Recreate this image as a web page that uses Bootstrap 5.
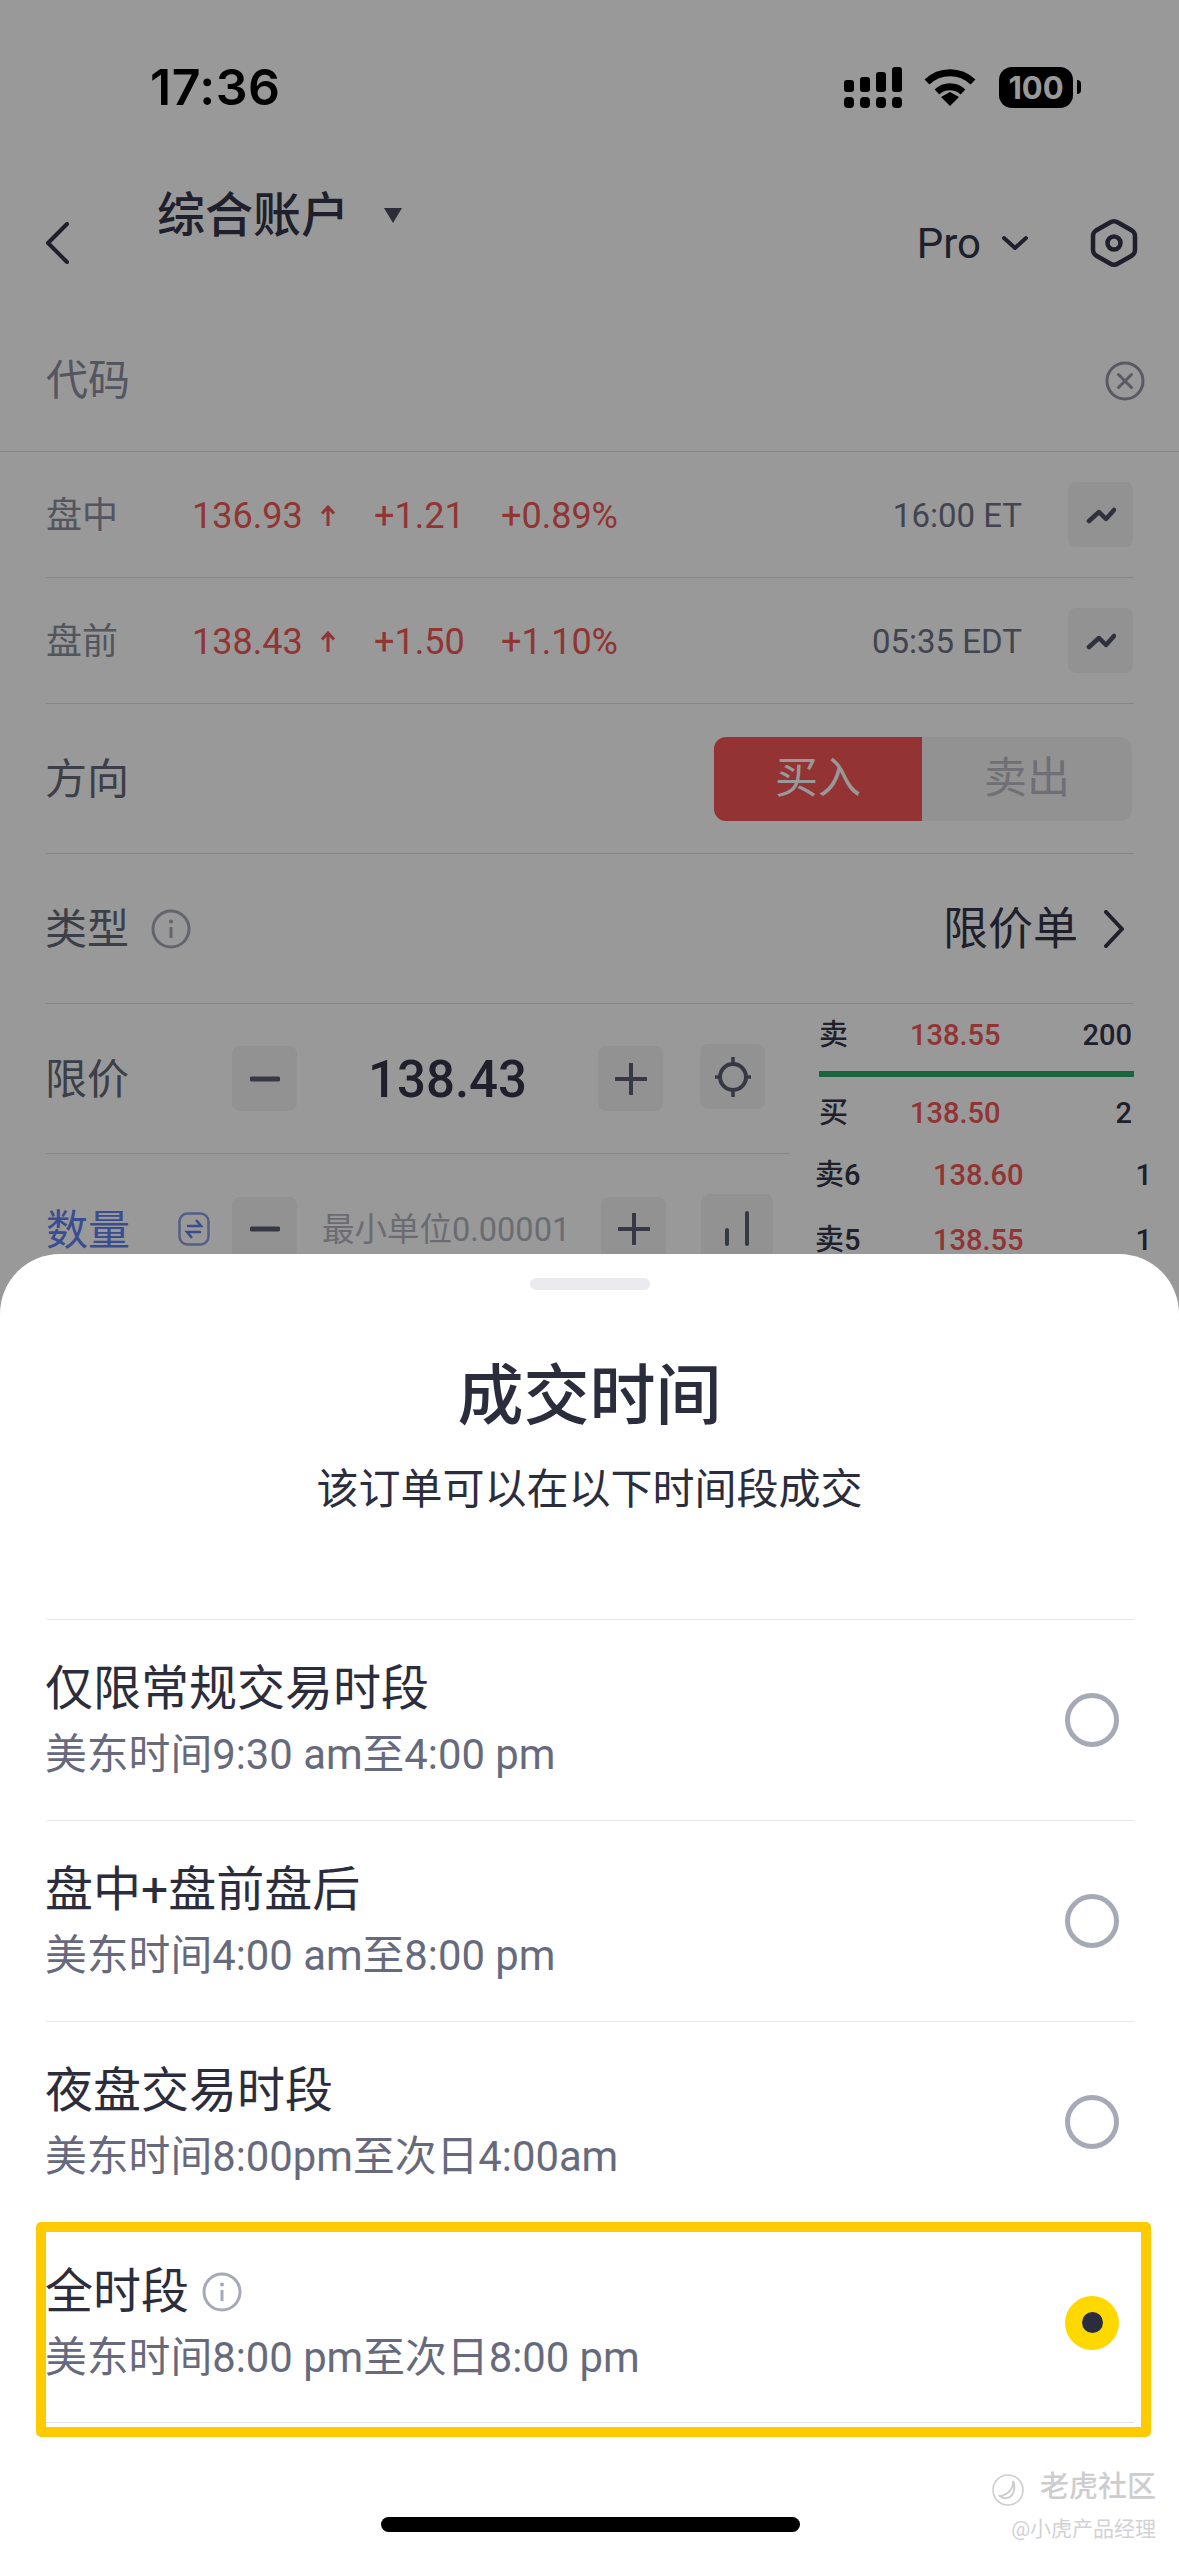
<!DOCTYPE html>
<html lang="zh-CN">
<head>
    <meta charset="UTF-8">
    <meta name="viewport" content="width=device-width, initial-scale=1.0">
    <title>成交时间</title>
    <link href="https://cdn.jsdelivr.net/npm/bootstrap@5.3.0/dist/css/bootstrap.min.css" rel="stylesheet">
    <style>
body { margin: 0; background: #fff; }
.screen { width: 1179px; height: 2556px; position: relative; overflow: hidden; background: #fff; color: #34364a;
    font-family: Roboto, "Noto Sans CJK SC", sans-serif; }
.dim-layer { position: absolute; inset: 0; background: rgba(0,0,0,.4); }

/* status bar */
.status-bar { height: 174px; padding: 0 98px 0 150px; }
.clock { font-family: Inter, sans-serif; font-weight: 600; font-size: 50px; letter-spacing: .5px; color: #000; line-height: 1; }
.status-wifi { margin: 0 23px 0 22px; }
.batt { width: 74px; height: 41px; background: #000; border-radius: 13px; color: #fff; font-family: Inter, sans-serif; font-weight: 700; font-size: 31px; line-height: 1; }
.batt-nub { width: 4px; height: 14px; background: #000; border-radius: 0 5px 5px 0; margin-left: 4px; }

/* header */
.top-head { height: 138px; padding: 0 41px 0 45px; }
.acct { font-size: 48px; font-weight: 500; line-height: 60px; margin: 6px 0 60px 88px; }
.acct-caret { margin: 0 0 56px 35px; }
.pro-txt { font-size: 42px; line-height: 1; padding-top: 2px; }
.pro-chev { margin: 0 62px 0 21px; }
.code-row { height: 140px; padding: 0 34px 2px 46px; border-bottom: 1px solid #e2e2e6; }
.code-txt { font-size: 42px; color: #8b8e9e; padding-top: 2px; line-height: 1.2; }

/* form rows */
.line-row { margin: 0 45px 0 46px; border-bottom: 1px solid #e2e2e6; }
.quote-row { height: 126px; font-size: 36px; line-height: 1; padding-right: 1px; }
.q-label { width: 147px; color: #8b8e9e; padding-top: 2px; }
.q-price { width: 182px; color: #f25757; margin-left: -1px; padding-top: 2px; }
.q-chg { width: 127px; color: #f25757; padding-top: 2px; }
.q-pct { color: #f25757; padding-top: 2px; }
.q-time { color: #6f7284; font-size: 33px; padding-top: 2px; }
.tool-btn { width: 65px; height: 65px; background: #f3f3f6; border-radius: 8px; flex: none; }
.q-btn { margin-left: 46px; }
.form-row { height: 150px; }
.f-label { font-size: 42px; color: #666979; line-height: 1; padding-top: 3px; margin-left: -1px; }
.side-btn { height: 84px; width: 208px; font-size: 43px; line-height: 1; }
.side-buy { background: #f65656; color: #fff; border-radius: 12px 0 0 12px; }
.side-sell { background: #f3f3f6; color: #b9bac3; border-radius: 0 12px 12px 0; width: 210px; margin-right: 2px; }
.pick-txt { font-size: 45px; line-height: 1; color: #34364a; padding-top: 2px; }
.pick-chev { margin: 0 9px 0 25px; }
.info-type { margin-left: 22px; }

/* price, quantity and order book */
.trade-left { width: 790px; flex: none; padding-left: 46px; }
.trade-row { height: 150px; }
.trade-row-line { border-bottom: 1px solid #e2e2e6; }
.trade-label { width: 187px; flex: none; }
.qty-label { width: 132px; flex: none; color: #5f80f0; font-weight: 400; font-size: 42px; line-height: 1; padding-top: 3px; }
.swap-box { width: 54px; flex: none; }
.price-val { width: 301px; flex: none; text-align: center; font-size: 51px; font-weight: 500; color: #34364a; line-height: 1; padding-top: 2px; }
.min-unit { width: 304px; flex: none; padding-left: 25px; font-size: 32.500px; color: #b3b5bf; line-height: 1; white-space: nowrap; padding-top: 2px; }
.gap-btn { margin-left: 37px; }
.gap-btn-wide { margin-left: 35px; width: 72px; height: 68px; align-self: flex-start; margin-top: 40px; }
.gap-btn-cross { margin-top: -4px; }
.book-col { width: 389px; flex: none; padding-left: 29px; font-size: 29px; line-height: 1; font-weight: 500; color: #34364a; }
.book-row { display: grid; grid-template-columns: 91px 1fr auto; align-items: center; width: 313px; height: 62px; }
.book-bar { width: 315px; height: 6px; background: #2ea868; margin: 5px 0 5px; }
.book-deep { display: grid; grid-template-columns: 118px 1fr auto; align-items: center; width: 337px; height: 65px; margin-left: -4px; }
.book-row + .book-deep { margin-top: -1px; }
.book-px { color: #f25757; }

/* bottom sheet */
.sheet { position: absolute; left: 0; right: 0; bottom: 0; height: 1302px; background: #fff; border-radius: 60px 60px 0 0; color: #2b2d3d; }
.sheet-grip { width: 120px; height: 12px; border-radius: 6px; background: #ebebef; margin: 24px auto 0; }
.sheet-title { font-size: 66px; line-height: 90px; font-weight: 500; margin: 62px 0 0; }
.sheet-sub { font-size: 42px; line-height: 60px; margin: 18px 0 0; color: #2b2d3d; }
.opt-list { margin: 99px 45px 0 46px; }
.opt-row { height: 201px; border-top: 1px solid #e8e8ec; padding-right: 15px; }
.opt-text { padding-top: 37px; align-self: flex-start; margin-left: -1px; }
.opt-name { font-size: 48px; line-height: 64px; }
.opt-time { font-size: 41.800px; line-height: 62px; margin-top: 3px; color: #666a7c; }
.radio-off { width: 54px; height: 54px; border-radius: 50%; border: 5px solid #a6a9b6; }
.radio-on { width: 54px; height: 54px; border-radius: 50%; background: #ffd800; }
.radio-dot { width: 21px; height: 21px; border-radius: 50%; background: #2a2d3e; }
.info-mark { margin-left: 13px; }
.mark-box { position: absolute; left: 36px; top: 968px; width: 1115px; height: 215px; border: 10px solid #fecb00; border-radius: 5px; }
.home-bar { position: absolute; left: 381px; top: 1263px; width: 419px; height: 15px; border-radius: 8px; background: #000; }
.wm { position: absolute; right: 23px; line-height: 1; white-space: nowrap; }
.wm-main { top: 1219px; font-size: 29px; font-weight: 500; color: #cdcdd0; }
.wm-sub { top: 1265px; font-size: 21px; color: #d2d2d5; }
.wm-logo { margin-right: 16px; vertical-align: -9px; }
    </style>
</head>
<body>
<div class="screen">
    <div class="status-bar d-flex align-items-center justify-content-between">
        <div class="clock">17:36</div>
        <div class="d-flex align-items-center">
            <svg width="58" height="41" viewBox="0 0 58 41">
                <rect x="0" y="13" width="10" height="12" rx="3"/>
                <rect x="16" y="10" width="10" height="15" rx="3"/>
                <rect x="32" y="5" width="10" height="20" rx="3"/>
                <rect x="48" y="0" width="10" height="25" rx="3"/>
                <rect x="0" y="30" width="10" height="11" rx="4"/>
                <rect x="16" y="30" width="10" height="11" rx="4"/>
                <rect x="32" y="30" width="10" height="11" rx="4"/>
                <rect x="48" y="30" width="10" height="11" rx="4"/>
            </svg>
            <svg class="status-wifi" width="52" height="38" viewBox="0 0 52 38">
                <path d="M3 14a33 33 0 0 1 46 0M13 24a19 19 0 0 1 26 0" fill="none" stroke="#000" stroke-width="7"/>
                <path d="M17 29l9-5 9 5-9 9z" fill="#000"/>
            </svg>
            <div class="batt d-flex align-items-center justify-content-center">100</div>
            <div class="batt-nub"></div>
        </div>
    </div>

    <div class="top-head d-flex align-items-center">
        <svg width="24" height="42" viewBox="0 0 24 42"><path d="M22 2L3 21l19 19" fill="none" stroke="#34364a" stroke-width="4" stroke-linecap="round" stroke-linejoin="round"/></svg>
        <div class="acct">综合账户</div>
        <svg class="acct-caret" width="18" height="15" viewBox="0 0 18 15"><path d="M0 0h18L9 15z" fill="#4a4c5e"/></svg>
        <div class="pro-txt ms-auto">Pro</div>
        <svg class="pro-chev" width="26" height="16" viewBox="0 0 26 16"><path d="M2 3l11 10L24 3" fill="none" stroke="#34364a" stroke-width="4" stroke-linecap="round" stroke-linejoin="round"/></svg>
        <svg width="48" height="50" viewBox="0 0 48 50">
            <path d="M20 4.500Q24 2 28 4.500L42 12.500Q45 14.500 45 18V32Q45 35.500 42 37.500L28 45.500Q24 48 20 45.500L6 37.500Q3 35.500 3 32V18Q3 14.500 6 12.500Z" fill="none" stroke="#34364a" stroke-width="4.500"/>
            <circle cx="24" cy="25" r="6.500" fill="none" stroke="#34364a" stroke-width="4.500"/>
        </svg>
    </div>

    <div class="code-row d-flex align-items-center justify-content-between">
        <div class="code-txt">代码</div>
        <svg width="40" height="40" viewBox="0 0 40 40">
            <circle cx="20" cy="20" r="18" fill="none" stroke="#9497a5" stroke-width="3"/>
            <path d="M13.500 13.500l13 13M26.500 13.500l-13 13" stroke="#9497a5" stroke-width="3" stroke-linecap="round"/>
        </svg>
    </div>

    <div class="line-row quote-row d-flex align-items-center">
        <div class="q-label">盘中</div>
        <div class="q-price d-flex align-items-center">136.93
            <svg class="ms-3" width="18" height="24" viewBox="0 0 18 24"><path d="M9 22V3M3 9.500L9 3l6 6.500" fill="none" stroke="#f25757" stroke-width="3"/></svg>
        </div>
        <div class="q-chg">+1.21</div>
        <div class="q-pct">+0.89%</div>
        <div class="q-time ms-auto">16:00 ET</div>
        <div class="tool-btn q-btn d-flex align-items-center justify-content-center">
            <svg width="30" height="18" viewBox="0 0 30 18"><path d="M3 15l10-9 7 7 8-9" fill="none" stroke="#4f5266" stroke-width="4.500" stroke-linejoin="round" stroke-linecap="round"/></svg>
        </div>
    </div>
    <div class="line-row quote-row d-flex align-items-center">
        <div class="q-label">盘前</div>
        <div class="q-price d-flex align-items-center">138.43
            <svg class="ms-3" width="18" height="24" viewBox="0 0 18 24"><path d="M9 22V3M3 9.500L9 3l6 6.500" fill="none" stroke="#f25757" stroke-width="3"/></svg>
        </div>
        <div class="q-chg">+1.50</div>
        <div class="q-pct">+1.10%</div>
        <div class="q-time ms-auto">05:35 EDT</div>
        <div class="tool-btn q-btn d-flex align-items-center justify-content-center">
            <svg width="30" height="18" viewBox="0 0 30 18"><path d="M3 15l10-9 7 7 8-9" fill="none" stroke="#4f5266" stroke-width="4.500" stroke-linejoin="round" stroke-linecap="round"/></svg>
        </div>
    </div>

    <div class="line-row form-row d-flex align-items-center justify-content-between">
        <div class="f-label">方向</div>
        <div class="d-flex">
            <div class="side-btn side-buy d-flex align-items-center justify-content-center">买入</div>
            <div class="side-btn side-sell d-flex align-items-center justify-content-center">卖出</div>
        </div>
    </div>

    <div class="line-row form-row d-flex align-items-center">
        <div class="f-label">类型</div>
        <svg class="info-type" width="40" height="40" viewBox="0 0 40 40">
            <circle cx="20" cy="20" r="18" fill="none" stroke="#a6a9b6" stroke-width="3"/>
            <circle cx="20" cy="12.500" r="2" fill="#a6a9b6"/>
            <path d="M20 18v11" stroke="#a6a9b6" stroke-width="3"/>
        </svg>
        <div class="pick-txt ms-auto">限价单</div>
        <svg class="pick-chev" width="22" height="38" viewBox="0 0 22 38"><path d="M3 2l16 17L3 36" fill="none" stroke="#34364a" stroke-width="4" stroke-linecap="round" stroke-linejoin="round"/></svg>
    </div>

    <div class="d-flex">
        <div class="trade-left">
            <div class="trade-row trade-row-line d-flex align-items-center">
                <div class="f-label trade-label">限价</div>
                <div class="tool-btn d-flex align-items-center justify-content-center">
                    <svg width="30" height="6" viewBox="0 0 30 6"><path d="M2 3h26" stroke="#5b5e70" stroke-width="5" stroke-linecap="round"/></svg>
                </div>
                <div class="price-val">138.43</div>
                <div class="tool-btn d-flex align-items-center justify-content-center">
                    <svg width="32" height="32" viewBox="0 0 32 32"><path d="M16 1v30M1 16h30" stroke="#5b5e70" stroke-width="4" stroke-linecap="round"/></svg>
                </div>
                <div class="tool-btn gap-btn gap-btn-cross d-flex align-items-center justify-content-center">
                    <svg width="38" height="42" viewBox="0 0 38 42">
                        <circle cx="19" cy="21" r="13" fill="none" stroke="#5b5e70" stroke-width="4"/>
                        <path d="M19 1v8M19 33v8M1 21h5M32 21h5" stroke="#5b5e70" stroke-width="3.500"/>
                    </svg>
                </div>
            </div>
            <div class="trade-row d-flex align-items-center">
                <div class="qty-label">数量</div>
                <div class="swap-box">
                    <svg width="32" height="34" viewBox="0 0 32 34">
                        <rect x="1.500" y="1.500" width="29" height="31" rx="8" fill="none" stroke="#8c9fe0" stroke-width="2.500"/>
                        <path d="M9 14h14l-5-6M23 20H9l5 6" fill="none" stroke="#5f80f0" stroke-width="2.500"/>
                    </svg>
                </div>
                <div class="tool-btn d-flex align-items-center justify-content-center">
                    <svg width="30" height="6" viewBox="0 0 30 6"><path d="M2 3h26" stroke="#5b5e70" stroke-width="5" stroke-linecap="round"/></svg>
                </div>
                <div class="min-unit">最小单位0.00001</div>
                <div class="tool-btn d-flex align-items-center justify-content-center">
                    <svg width="32" height="32" viewBox="0 0 32 32"><path d="M16 1v30M1 16h30" stroke="#5b5e70" stroke-width="4" stroke-linecap="round"/></svg>
                </div>
                <div class="tool-btn gap-btn-wide d-flex align-items-center justify-content-center">
                    <svg width="30" height="36" viewBox="0 0 30 36"><path d="M5 20v14M25 3v31" stroke="#5b5e70" stroke-width="4" stroke-linecap="round"/></svg>
                </div>
            </div>
        </div>
        <div class="book-col">
            <div class="book-row"><span>卖</span><span class="book-px">138.55</span><span>200</span></div>
            <div class="book-bar"></div>
            <div class="book-row"><span>买</span><span class="book-px">138.50</span><span>2</span></div>
            <div class="book-deep"><span>卖6</span><span class="book-px">138.60</span><span>1</span></div>
            <div class="book-deep"><span>卖5</span><span class="book-px">138.55</span><span>1</span></div>
        </div>
    </div>

    <div class="dim-layer"></div>

    <div class="sheet">
        <div class="sheet-grip"></div>
        <h2 class="sheet-title text-center">成交时间</h2>
        <p class="sheet-sub text-center">该订单可以在以下时间段成交</p>
        <div class="opt-list">
            <div class="opt-row d-flex align-items-center justify-content-between">
                <div class="opt-text">
                    <div class="opt-name">仅限常规交易时段</div>
                    <div class="opt-time">美东时间9:30 am至4:00 pm</div>
                </div>
                <div class="radio-off"></div>
            </div>
            <div class="opt-row d-flex align-items-center justify-content-between">
                <div class="opt-text">
                    <div class="opt-name">盘中+盘前盘后</div>
                    <div class="opt-time">美东时间4:00 am至8:00 pm</div>
                </div>
                <div class="radio-off"></div>
            </div>
            <div class="opt-row d-flex align-items-center justify-content-between">
                <div class="opt-text">
                    <div class="opt-name">夜盘交易时段</div>
                    <div class="opt-time">美东时间8:00pm至次日4:00am</div>
                </div>
                <div class="radio-off"></div>
            </div>
            <div class="opt-row border-bottom d-flex align-items-center justify-content-between">
                <div class="opt-text">
                    <div class="opt-name d-flex align-items-center">全时段
                        <svg class="info-mark" width="40" height="40" viewBox="0 0 40 40">
                            <circle cx="20" cy="20" r="18" fill="none" stroke="#a6a9b6" stroke-width="3"/>
                            <circle cx="20" cy="12.500" r="2" fill="#a6a9b6"/>
                            <path d="M20 18v11" stroke="#a6a9b6" stroke-width="3"/>
                        </svg>
                    </div>
                    <div class="opt-time">美东时间8:00 pm至次日8:00 pm</div>
                </div>
                <div class="radio-on d-flex align-items-center justify-content-center"><div class="radio-dot"></div></div>
            </div>
        </div>
        <div class="mark-box"></div>
        <div class="home-bar"></div>
        <div class="wm wm-main">
            <svg class="wm-logo" width="32" height="32" viewBox="0 0 32 32">
                <circle cx="16" cy="16" r="15" fill="none" stroke="#cdcdd0" stroke-width="1.500"/>
                <path d="M21 7c1 6-4 14-13 15 3 3 9 3 12-1 3-4 3-10 1-14z" fill="none" stroke="#cdcdd0" stroke-width="2"/>
            </svg>老虎社区
        </div>
        <div class="wm wm-sub">@小虎产品经理</div>
    </div>
</div>
<script src="https://cdn.jsdelivr.net/npm/bootstrap@5.3.0/dist/js/bootstrap.bundle.min.js"></script>
</body>
</html>
